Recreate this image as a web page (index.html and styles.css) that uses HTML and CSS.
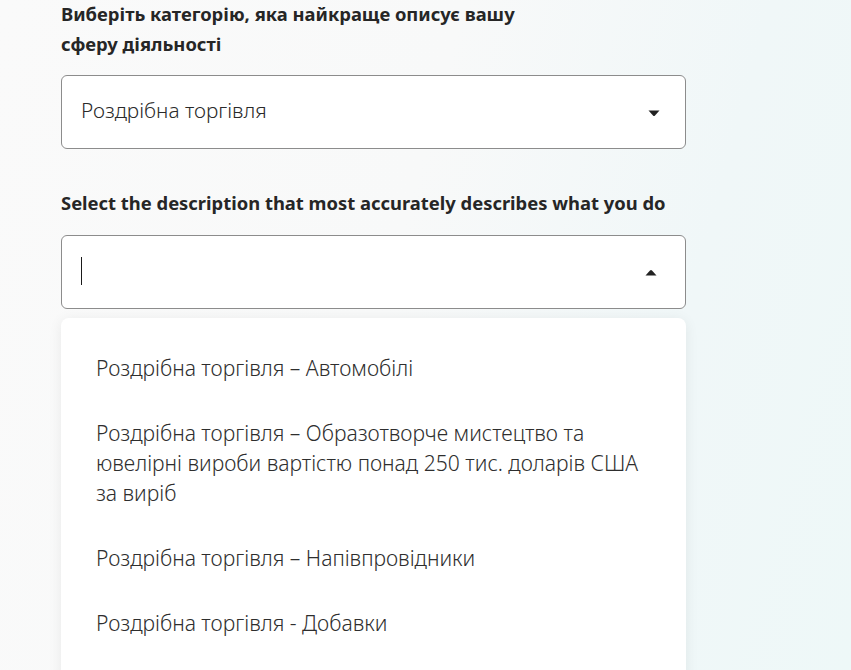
FILE: index.html
```html
<!DOCTYPE html>
<html lang="uk">
<head>
<meta charset="utf-8">
<link rel="stylesheet" href="styles.css">
</head>
<body>
<main class="form">
  <h2 class="label label-wide">Виберіть категорію, яка найкраще описує вашу сферу діяльності</h2>
  <div class="select">
    <span class="select-value">Роздрібна торгівля</span>
    <svg class="caret" width="12" height="7" viewBox="0 0 12 7"><path d="M0.5 0.5 H11.5 L7 5.6 Q6 6.6 5 5.6 Z" fill="#222"/></svg>
  </div>
  <h2 class="label label-second">Select the description that most accurately describes what you do</h2>
  <div class="select select-open">
    <span class="cursor"></span>
    <svg class="caret caret-up" width="12" height="7" viewBox="0 0 12 7"><path d="M0.5 6.5 H11.5 L7 1.4 Q6 0.4 5 1.4 Z" fill="#222"/></svg>
  </div>
  <ul class="menu">
    <li class="option">Роздрібна торгівля – Автомобілі</li>
    <li class="option">Роздрібна торгівля – Образотворче мистецтво та ювелірні вироби вартістю понад 250 тис. доларів США за виріб</li>
    <li class="option">Роздрібна торгівля – Напівпровідники</li>
    <li class="option">Роздрібна торгівля - Добавки</li>
  </ul>
</main>
</body>
</html>
```

FILE: styles.css
```css
html, body {
  margin: 0;
  height: 100%;
}
body {
  background: linear-gradient(105deg, #fafafa 0%, #f8f9f9 45%, #f0f7f8 75%, #eef8f8 100%);
  font-family: "Noto Sans", "Open Sans", sans-serif;
  color: #2a2a2a;
  overflow: hidden;
}
.form {
  width: 625px;
  padding: 0 0 0 61px;
  display: flex;
  flex-direction: column;
}
.label {
  margin: 0;
  font-size: 18.4px;
  font-weight: 700;
  line-height: 30px;
  color: #262626;
}
.label-wide {
  max-width: 480px;
  margin-top: -1px;
}
.label-second {
  margin-top: 39px;
}
.select {
  box-sizing: border-box;
  height: 74px;
  border: 1px solid #8c8c8c;
  border-radius: 6px;
  background: #fff;
  display: flex;
  align-items: center;
  justify-content: space-between;
  padding: 0 25px 0 19px;
  margin-top: 16px;
}
.select-open {
  margin-top: 17px;
  padding-right: 28px;
}
.select-value {
  font-size: 20.8px;
  color: #2a2a2a;
  font-weight: 300;
  margin-top: -4px;
}
.caret {
  display: block;
  margin-top: 2px;
}
.caret-up {
  margin-top: 0;
}
.cursor {
  display: block;
  width: 1px;
  height: 28px;
  background: #1a1a1a;
  margin-top: -2px;
}
.menu {
  list-style: none;
  margin: 9px 0 0 0;
  padding: 18px 0 0 0;
  background: #fff;
  border-radius: 8px 8px 0 0;
  box-shadow: 0 2px 14px rgba(0, 0, 0, 0.07);
  height: 400px;
}
.option {
  padding: 17px 35px 18px 35px;
  font-size: 21.1px;
  line-height: 30px;
  color: #2e2e2e;
  font-weight: 300;
}
```
